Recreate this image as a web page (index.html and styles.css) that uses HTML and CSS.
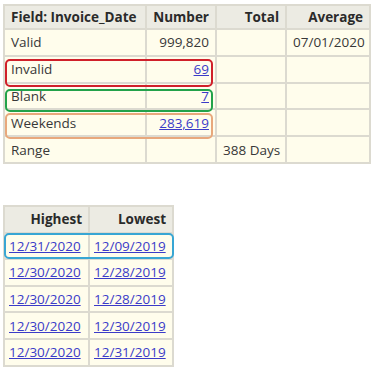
FILE: index.html
```html
<!DOCTYPE html>
<html>
<head>
<meta charset="utf-8">
<link rel="stylesheet" href="styles.css">
</head>
<body>
<div class="wrap">
  <table class="grid top">
    <colgroup><col class="c1"><col class="c2"><col class="c3"><col class="c4"></colgroup>
    <thead>
      <tr><th class="l">Field: Invoice_Date</th><th>Number</th><th>Total</th><th>Average</th></tr>
    </thead>
    <tbody>
      <tr><td class="l">Valid</td><td>999,820</td><td></td><td>07/01/2020</td></tr>
      <tr><td class="l">Invalid</td><td><a href="#">69</a></td><td></td><td></td></tr>
      <tr><td class="l">Blank</td><td><a href="#">7</a></td><td></td><td></td></tr>
      <tr><td class="l">Weekends</td><td><a href="#">283,619</a></td><td></td><td></td></tr>
      <tr><td class="l">Range</td><td></td><td class="l">388 Days</td><td></td></tr>
    </tbody>
  </table>
  <div class="mark red"></div>
  <div class="mark green"></div>
  <div class="mark orange"></div>
</div>

<div class="wrap second">
  <table class="grid bottom">
    <colgroup><col class="b1"><col class="b2"></colgroup>
    <thead>
      <tr><th>Highest</th><th>Lowest</th></tr>
    </thead>
    <tbody>
      <tr><td class="l"><a href="#">12/31/2020</a></td><td class="l"><a href="#">12/09/2019</a></td></tr>
      <tr><td class="l"><a href="#">12/30/2020</a></td><td class="l"><a href="#">12/28/2019</a></td></tr>
      <tr><td class="l"><a href="#">12/30/2020</a></td><td class="l"><a href="#">12/28/2019</a></td></tr>
      <tr><td class="l"><a href="#">12/30/2020</a></td><td class="l"><a href="#">12/30/2019</a></td></tr>
      <tr><td class="l"><a href="#">12/30/2020</a></td><td class="l"><a href="#">12/31/2019</a></td></tr>
    </tbody>
  </table>
  <div class="mark blue"></div>
</div>
</body>
</html>
```

FILE: styles.css
```css
html, body {
  margin: 0;
  padding: 0;
  background: #ffffff;
}
body {
  padding: 4px 3px 0 3px;
  font-family: "Open Sans", "DejaVu Sans", sans-serif;
  font-size: 13.5px;
  color: #383838;
}
.wrap {
  position: relative;
  width: max-content;
}
.second {
  margin-top: 41px;
}
.grid {
  border-collapse: collapse;
  table-layout: fixed;
  background: #fffdec;
  border: 2px solid #d3d1c6;
}
.grid th, .grid td {
  border: 2px solid #dcdad0;
  height: 24.8px;
  padding: 0 6px;
  text-align: right;
  white-space: nowrap;
  line-height: 20px;
}
.grid th {
  background: #ecebe3;
  font-weight: 700;
  color: #2a2a2a;
  height: 22px;
}
.bottom th, .bottom td {
  height: 24.6px;
}
.bottom td {
  padding: 0 4px;
}
.grid .l {
  text-align: left;
}
.top { width: 366px; }
.c1 { width: 142px; }
.c2 { width: 70px; }
.c3 { width: 70px; }
.c4 { width: 84px; }
.bottom { width: 169px; }
.b1 { width: 85px; }
.b2 { width: 84px; }
a {
  color: #3b3bc8;
  text-decoration: underline;
}
.mark {
  position: absolute;
  border: 2px solid;
  border-radius: 5px;
  box-sizing: border-box;
}
.red { border-color: #d0202a; left: 2px; top: 55px; width: 208px; height: 28px; }
.green { border-color: #22a24a; left: 2px; top: 85px; width: 208px; height: 23px; }
.orange { border-color: #e8a87c; left: 2px; top: 109px; width: 208px; height: 26px; }
.blue { border-color: #38a6d4; left: 1px; top: 28px; width: 170px; height: 26px; }
```
